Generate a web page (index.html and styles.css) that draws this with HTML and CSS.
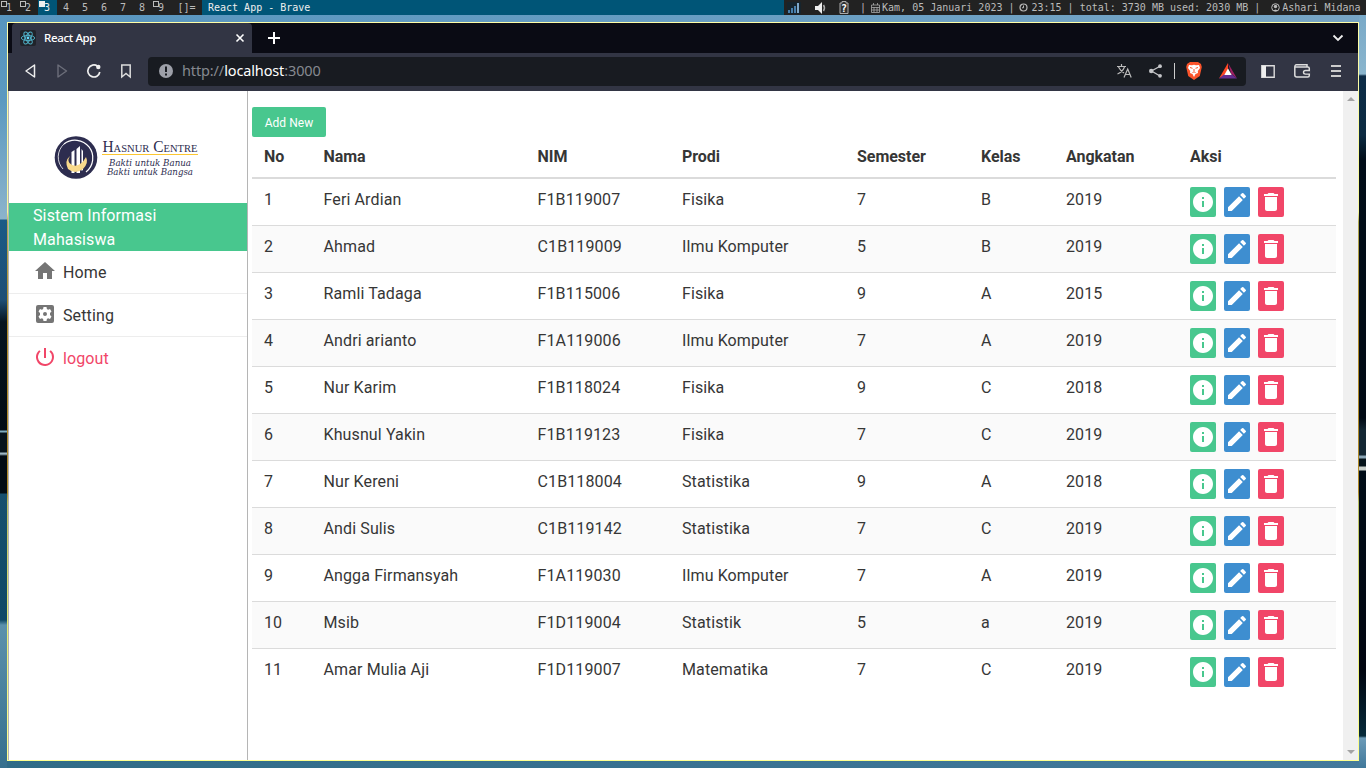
FILE: index.html
```html
<!DOCTYPE html>
<html lang="id">
<head>
<meta charset="utf-8">
<title>React App</title>
<link rel="stylesheet" href="styles.css">
</head>
<body>
<svg class="defs" width="0" height="0">
  <symbol id="info" viewBox="0 0 24 24"><path d="M12 2C6.480 2 2 6.480 2 12s4.480 10 10 10 10-4.480 10-10S17.520 2 12 2zm1 15h-2v-6h2v6zm0-8h-2V7h2v2z"/></symbol>
  <symbol id="edit" viewBox="0 0 24 24"><path d="M3 17.250V21h3.750L17.810 9.940l-3.750-3.750L3 17.250zM20.710 7.040a1 1 0 0 0 0-1.410l-2.340-2.340a1 1 0 0 0-1.410 0l-1.830 1.830 3.750 3.750 1.830-1.830z"/></symbol>
  <symbol id="trash" viewBox="0 0 24 24"><path d="M6 19c0 1.100.9 2 2 2h8c1.100 0 2-.9 2-2V7H6v12zM19 4h-3.500l-1-1h-5l-1 1H5v2h14V4z"/></symbol>
</svg>
<header class="bar">
  <nav class="tags">
    <span class="tag used">1</span><span class="tag used">2</span><span class="tag used active">3</span><span class="tag">4</span><span class="tag">5</span><span class="tag">6</span><span class="tag">7</span><span class="tag">8</span><span class="tag used">9</span>
  </nav>
  <span class="layout">[]=</span>
  <span class="title">React App - Brave</span>
  <div class="status">
    <svg class="signal" width="14" height="12"><rect width="14" height="12" fill="#17242c"/><path d="M1 8h2v3H1zM4 6h2v5H4zM7 4h2v7H7z" fill="#477eab"/><path d="M10 1h2v10h-2z" fill="#7fa8c9"/></svg>
    <svg class="speaker" width="12" height="12"><path d="M0 4h3l4-4v12L3 8H0z" fill="#eee"/><path d="M8.500 3q2 3 0 6" stroke="#aaa" stroke-width="1.500" fill="none"/></svg>
    <svg class="battery" width="10" height="13"><path d="M1 2h2V.5h4V2h2v10.500H1z" fill="#333" stroke="#aaa"/><text x="2" y="11" font-size="10" font-weight="bold" fill="#fff">?</text></svg>
    <span class="sep">|</span>
    <svg class="cal" width="9" height="10"><path d="M.5 2h8v7.500h-8zM.5 4.500h8M.5 7h8M3 4v5M6 4v5M2.500 0v2M6.500 0v2" fill="none" stroke="#aaa" stroke-width=".8"/></svg>
    <span class="date">Kam, 05 Januari 2023 |</span>
    <svg class="clock" width="9" height="9"><circle cx="4.500" cy="4.500" r="3.500" fill="none" stroke="#bbb" stroke-width="1.200"/><path d="M4.500 2.500v2.300H3" fill="none" stroke="#bbb"/></svg>
    <span class="time">23:15 | total: 3730 MB used: 2030 MB |</span>
    <svg class="user" width="9" height="9"><circle cx="4.500" cy="4.500" r="3.800" fill="none" stroke="#bbb"/><circle cx="4.500" cy="3.500" r="1.700" fill="#bbb"/><path d="M2 8q2.500-3 5 0z" fill="#bbb"/></svg>
    <span>Ashari Midana</span>
  </div>
</header>
<div class="window">
  <div class="tabs">
    <div class="tab">
      <svg width="16" height="16"><rect width="16" height="16" rx="2" fill="#20232a"/><g fill="none" stroke="#50b4cc" stroke-width=".9"><ellipse cx="8" cy="8" rx="6.700" ry="2.600"/><ellipse cx="8" cy="8" rx="6.700" ry="2.600" transform="rotate(60 8 8)"/><ellipse cx="8" cy="8" rx="6.700" ry="2.600" transform="rotate(120 8 8)"/></g><circle cx="8" cy="8" r="1.400" fill="#61dafb"/></svg>
      <span>React App</span>
      <svg class="close" width="10" height="10"><path d="M1.500 1.500l7 7M8.500 1.500l-7 7" stroke="#fff" stroke-width="1.600"/></svg>
    </div>
    <svg class="plus" width="12" height="12"><path d="M6 0v12M0 6h12" stroke="#fff" stroke-width="2"/></svg>
    <svg class="chev" width="12" height="8"><path d="M1.500 1.500L6 6l4.500-4.500" fill="none" stroke="#eee" stroke-width="1.800"/></svg>
  </div>
  <div class="toolbar">
    <div class="nav">
      <svg width="12" height="16"><path d="M10.500 2v12L2 8z" fill="none" stroke="#eee" stroke-width="1.500" stroke-linejoin="round"/></svg>
      <svg width="12" height="16"><path d="M2 2v12l8.500-6z" fill="none" stroke="#6c6e7a" stroke-width="1.400" stroke-linejoin="round"/></svg>
      <svg width="16" height="16"><path d="M11.500 3.200A6 6 0 1 0 13.800 9" fill="none" stroke="#eee" stroke-width="1.700"/><circle cx="12.300" cy="4" r="2.200" fill="#eee"/></svg>
      <svg width="12" height="16"><path d="M1.800 2h8.400v12L6 10.500 1.800 14z" fill="none" stroke="#ddd" stroke-width="1.500"/></svg>
    </div>
    <div class="address">
      <svg width="14" height="14"><circle cx="7" cy="7" r="7" fill="#9da0a9"/><path d="M6 2.500h2V8H6zM6 9.500h2v2H6z" fill="#181b21"/></svg>
      <span class="url">http://<b>localhost</b>:3000</span>
      <div class="tools">
        <svg width="15" height="14"><path d="M0 2.500h9M4.500 0v2.500M7.500 3Q5.500 8 .5 10M1.500 3Q3.500 7 7 9M7 13.500L10.700 5l3.500 8.500M8.500 10.500h4.700" fill="none" stroke="#bbb" stroke-width="1.200"/></svg>
        <svg class="share" width="13" height="14"><path d="M11 2.200L2.500 7l8.500 5" fill="none" stroke="#c5c6c9" stroke-width="1.300"/><g fill="#c5c6c9"><circle cx="11" cy="2.200" r="1.900"/><circle cx="2.200" cy="7" r="2.200"/><circle cx="11" cy="11.800" r="1.900"/></g></svg>
        <i class="rule"></i>
        <svg class="lion" width="16" height="18"><path d="M4 0h8l3 2 .8 3-2 9L8 18l-5.800-4L.2 5 1 2z" fill="#fb542b"/><path d="M3 3l3 .3 2-.5 2 .5 3-.3 1 3-2.200 3 .2 2-2.500 1L8 15l-1.500-3L4 11l.2-2L2 6z" fill="#fff"/><path d="M4 5.500l2.500.8M12 5.500l-2.500.8M8 7v2M6.500 10.500L8 9.800l1.500.7" fill="none" stroke="#fb542b"/></svg>
        <svg class="bat" width="18" height="16"><path d="M9 0L0 15.500l9-5z" fill="#ff4724"/><path d="M9 0l9 15.500-6-5z" fill="#9e1f63"/><path d="M0 15.500h18l-5-4H5z" fill="#662d91"/><path d="M9 5.500l3.700 6.500H5.300z" fill="#fff"/></svg>
      </div>
    </div>
    <svg class="panel" width="14" height="13"><path d="M.8.8h12.400v11.400H.8z" fill="none" stroke="#ddd" stroke-width="1.400"/><path d="M1 1h4v11H1z" fill="#eee"/></svg>
    <svg class="wallet" width="17" height="14"><path d="M13 2.800V.8H2.500Q.8.8.8 3v8q0 2 2 2h11q1.500 0 1.500-1.500V4.500Q15.300 3 13.800 3H1" fill="none" stroke="#ddd" stroke-width="1.500"/><path d="M16 6.500h-4.500q-2 0-2 1.800t2 1.800H16" fill="#323544" stroke="#ddd" stroke-width="1.400"/></svg>
    <svg class="menu" width="10" height="13"><path d="M0 1h10M0 6h10M0 11h10" stroke="#ccc" stroke-width="2"/></svg>
  </div>
  <div class="page">
    <aside class="side">
      <svg class="logo" width="150" height="50" viewBox="0 0 150 50">
        <circle cx="26" cy="25.500" r="21.300" fill="#2d2d4f"/>
        <path d="M14 12A17.500 17.500 0 1 1 36 40" fill="none" stroke="#fff" stroke-width="1.200"/>
        <path d="M14 12A17.500 17.500 0 0 0 13 37" fill="none" stroke="#fff" stroke-width=".8"/>
        <path d="M21.500 41V20l3-2v23zM26.500 41V17l3.500-3v27zM31.500 39V17l1.500 2v19z" fill="#fff"/>
        <path d="M20 24q-4 6 2 9 8 3 14-8 3 6-3 12-8 6-15 0-4-8 2-13z" fill="#f8d98b"/>
        <g class="logo-text">
          <text class="logo-name" x="52.500" y="19.500" textLength="95" lengthAdjust="spacingAndGlyphs">Hasnur Centre</text>
          <text class="logo-motto" x="59" y="34" textLength="82" lengthAdjust="spacingAndGlyphs">Bakti untuk Banua</text>
          <text class="logo-motto" x="57" y="42.500" textLength="86" lengthAdjust="spacingAndGlyphs">Bakti untuk Bangsa</text>
        </g>
        <path d="M52 22.500h96" stroke="#fcc630"/>
      </svg>
      <div class="brand">Sistem Informasi Mahasiswa</div>
      <a class="item"><svg viewBox="0 0 24 24"><path d="M10 20v-6h4v6h5v-8h3L12 3 2 12h3v8z"/></svg><span>Home</span></a>
      <a class="item"><svg viewBox="0 0 24 24"><path fill-rule="evenodd" d="M5 3h14a2 2 0 0 1 2 2v14a2 2 0 0 1-2 2H5a2 2 0 0 1-2-2V5a2 2 0 0 1 2-2zM10.500 5l-.4 2-1.200.7L7 7 5.500 9.600 7 11v2l-1.500 1.400L7 17l1.900-.7 1.200.7.4 2h3l.4-2 1.200-.7 1.900.7 1.500-2.600L17 13v-2l1.500-1.400L17 7l-1.900.7-1.200-.7-.4-2zM12 10a2 2 0 1 1 0 4 2 2 0 0 1 0-4z"/></svg><span>Setting</span></a>
      <a class="item out"><svg viewBox="0 0 24 24"><path d="M13 3h-2v10h2V3zm4.830 2.170l-1.420 1.420A6.920 6.920 0 0 1 19 12a7 7 0 1 1-11.420-5.420L6.170 5.170A9 9 0 1 0 21 12a8.960 8.960 0 0 0-3.170-6.830z"/></svg><span>logout</span></a>
    </aside>
    <main class="main">
      <button class="add">Add New</button>
      <table class="table">
        <colgroup><col class="c-no"><col class="c-nama"><col class="c-nim"><col class="c-prodi"><col class="c-sem"><col class="c-kelas"><col class="c-angk"><col></colgroup>
        <thead><tr><th>No</th><th>Nama</th><th>NIM</th><th>Prodi</th><th>Semester</th><th>Kelas</th><th>Angkatan</th><th>Aksi</th></tr></thead>
        <tbody id="rows"></tbody>
      </table>
    </main>
    <div class="scroll"><svg width="8" height="4"><path d="M0 4l4-4 4 4z" fill="#a3a3a3"/></svg><svg width="8" height="4"><path d="M0 0l4 4 4-4z" fill="#a3a3a3"/></svg></div>
  </div>
</div>
<script src="app.js"></script>
</body>
</html>
```
FILE: styles.css
```css
* { box-sizing: border-box; }
html, body { height: 100%; overflow: hidden; }
body {
  margin: 0; display: flex; flex-direction: column;
  font-family: Roboto, sans-serif; font-size: 16px; line-height: 24px; color: #363636;
  background:
    linear-gradient(#5795bf 0, #5a99c0 100px, #8cb3cb 219px, #1c5a86 220px, #1d4e75 300px, #06141f 322px, #020c14 430px, #80aebf 431px, #80aebf 432px, #07141b 433px, #07141b 452px, #9fb8c4 453px, #9fb8c4 454px, #020c14 456px, #020c14 493px, #17506e 494px, #104966 620px, #5c91ac 625px, #366f8d 768px) 0 0 / 7px 768px no-repeat,
    linear-gradient(#75a6c6 0, #8ab5cd 74px, #0d2c47 76px, #0c2b42 135px, #010d18 160px, #010a14 418px, #142733 430px, #142733 455px, #8aa5b5 456px, #8aa5b5 458px, #06141b 459px, #06141b 466px, #c9cfca 467px, #c9cfca 470px, #010d18 471px, #010510 670px, #062a3a 736px, #6b9ab7 738px, #40789a 768px) 1359px 0 / 7px 768px no-repeat,
    linear-gradient(90deg, #5795bf, #77a5c5) 0 0 / 100% 30px no-repeat,
    linear-gradient(90deg, #306b87, #44799c);
}
svg { display: block; flex: none; }
.defs { position: absolute; }

.bar { flex: none; height: 15px; display: flex; background: #222; color: #bbb; font: 10px/15px "DejaVu Sans Mono", monospace; white-space: pre; }
.tags { display: flex; }
.tag { position: relative; width: 19px; padding-left: 6px; }
.tag.used::before { content: ""; position: absolute; left: 1px; top: 1px; width: 4px; height: 4px; border: 1px solid #bbb; }
.tag.active, .title { background: #005577; color: #eee; }
.tag.active::before { background: #eee; border-color: #eee; }
.layout { width: 31px; padding-left: 6.500px; }
.title { flex: 1; padding-left: 6px; }
.status { width: 582px; display: flex; align-items: center; }
.signal { margin-left: 3px; }
.speaker { margin-left: 14px; }
.battery { margin-left: 12px; }
.sep { margin-left: 11px; }
.cal { margin-left: 5px; }
.date { margin-left: 2px; }
.clock { margin-left: 5px; }
.time { margin-left: 3px; }
.user { margin-left: 11px; }
.status .user + span { margin-left: 2px; }

.window {
  margin: 7px 7px 7px 7px; height: 739px; padding: 1px; display: flex; flex-direction: column;
  background: linear-gradient(#ffffa8 0, #f5f59c 190px, #b0a850 200px, #b08a28 300px, #b08a28 470px, #b8bd62 480px, #e8ee78 610px, #ffff90);
}
.tabs { height: 30px; flex: none; display: flex; align-items: center; background: #0a0b14; padding-left: 4px; }
.tab { width: 240px; height: 30px; display: flex; align-items: center; gap: 8px; padding: 0 7px 0 8px; background: #323544; border-radius: 4px 4px 0 0; color: #fff; font: 500 11.500px/16px "Noto Sans", sans-serif; }
.tab span { letter-spacing: -.35px; }
.close { margin-left: auto; }
.plus { margin-left: 16px; }
.chev { margin-left: auto; margin-right: 14px; }
.toolbar { height: 38px; flex: none; display: flex; align-items: center; padding-bottom: 2px; background: #323544; }
.nav { width: 140px; display: flex; align-items: center; padding: 0 0 0 16px; }
.nav svg:nth-child(2) { margin-left: 20px; }
.nav svg:nth-child(3) { margin-left: 18px; }
.nav svg:nth-child(4) { margin-left: 18px; }
.address { width: 1098px; height: 29px; display: flex; align-items: center; padding-left: 11px; border-radius: 4px; background: #181b21; }
.url { margin-left: 9px; padding-bottom: 2px; color: #868990; font: 14.500px/20px "Noto Sans", sans-serif; letter-spacing: -.13px; }
.url b { color: #fff; font-weight: 400; }
.tools { margin-left: auto; display: flex; align-items: center; padding-right: 9px; }
.share { margin-left: 17px; }
.rule { width: 1px; height: 16px; margin-left: 12px; background: #ccc; }
.lion { margin-left: 11px; }
.bat { margin-left: 17px; }
.panel { margin-left: 15px; }
.wallet { margin-left: 19px; }
.menu { margin-left: 20px; }

.page { flex: 1; min-height: 0; display: flex; background: #fff; }
.side { width: 240px; border: solid #b5b5b5; border-width: 0 1px; }
.logo { margin: 41px 0 0 41px; }
.logo-text { fill: #2d2d4f; }
.logo-name { font: 16px "Liberation Serif", serif; font-variant: small-caps; }
.logo-motto { font: italic 9px "DejaVu Serif", serif; }
.brand { margin-top: 21px; padding: 1px 70px 0 24px; height: 48px; background: #48c78e; color: #fff; letter-spacing: .12px; }
.item { height: 43px; display: flex; align-items: center; padding: 0 0 2px 24px; gap: 6px; border-bottom: 1px solid #ededed; letter-spacing: .12px; }
.item span { padding-top: 3px; }
.item svg { width: 24px; height: 24px; fill: #757575; }
.item.out { height: 42px; color: #f14668; border: 0; }
.item.out svg { fill: #f14668; }
.main { flex: 1; padding: 16px 7px 0 4px; }
.add { display: block; width: 74px; height: 30px; padding: 1px 0 0; border: 0; border-radius: 2px; background: #48c78e; color: #fff; font: 12px/18px Roboto, sans-serif; letter-spacing: .05px; }
.table { width: 1084px; table-layout: fixed; border-collapse: separate; border-spacing: 0; }
.c-no { width: 59.500px; }
.c-nama { width: 214px; }
.c-nim { width: 144.500px; }
.c-prodi { width: 175px; }
.c-sem { width: 124px; }
.c-kelas { width: 85px; }
.c-angk { width: 124px; }
.table th, .table td { padding: 8px 12px; text-align: left; vertical-align: top; border-bottom: 1px solid #dbdbdb; }
.table th { border-bottom-width: 2px; font-weight: 700; letter-spacing: -.03px; }
.table td { padding-top: 9px; letter-spacing: .12px; }
.table td:last-child { padding-top: 8px; }
.table tbody tr:nth-child(even) { background: #fafafa; }
.table tbody tr:last-child td { border-bottom: 0; }
.acts { display: flex; gap: 8px; }
.act { width: 26px; height: 30px; display: grid; place-items: center; border-radius: 2px; fill: #fff; }
.act svg { width: 24px; height: 24px; }
.act.info { background: #48c78e; }
.act.edit { background: #3e8ed0; }
.act.trash { background: #f14668; }
.scroll { width: 15px; flex: none; display: flex; flex-direction: column; justify-content: space-between; align-items: center; padding: 6px 0; background: #f0f0f0; }
```
FILE: app.js
```js
const students = [
  ["Feri Ardian", "F1B119007", "Fisika", 7, "B", 2019],
  ["Ahmad", "C1B119009", "Ilmu Komputer", 5, "B", 2019],
  ["Ramli Tadaga", "F1B115006", "Fisika", 9, "A", 2015],
  ["Andri arianto", "F1A119006", "Ilmu Komputer", 7, "A", 2019],
  ["Nur Karim", "F1B118024", "Fisika", 9, "C", 2018],
  ["Khusnul Yakin", "F1B119123", "Fisika", 7, "C", 2019],
  ["Nur Kereni", "C1B118004", "Statistika", 9, "A", 2018],
  ["Andi Sulis", "C1B119142", "Statistika", 7, "C", 2019],
  ["Angga Firmansyah", "F1A119030", "Ilmu Komputer", 7, "A", 2019],
  ["Msib", "F1D119004", "Statistik", 5, "a", 2019],
  ["Amar Mulia Aji", "F1D119007", "Matematika", 7, "C", 2019]
];
const actions = ["info", "edit", "trash"]
  .map(a => `<a class="act ${a}"><svg><use href="#${a}"/></svg></a>`).join("");
document.getElementById("rows").innerHTML = students
  .map((s, i) => `<tr>${[i + 1, ...s].map(v => `<td>${v}</td>`).join("")}<td><div class="acts">${actions}</div></td></tr>`)
  .join("");
```
